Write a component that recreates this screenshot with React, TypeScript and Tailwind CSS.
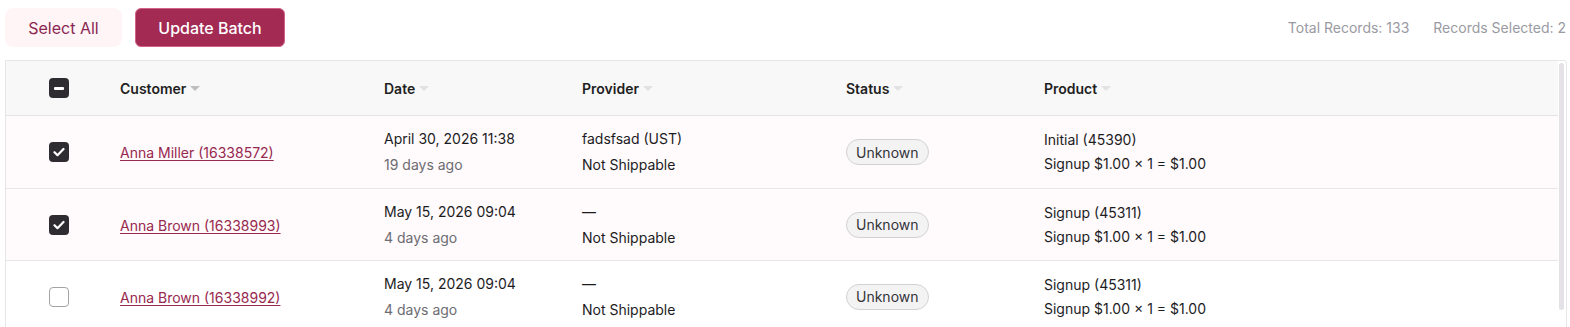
import React from 'react';

type Row = {
  checked: boolean;
  customer: string;
  date: string;
  ago: string;
  provider: string;
  shipping: string;
  product: string;
  line: string;
};

const rows: Row[] = [
  {
    checked: true,
    customer: 'Anna Miller (16338572)',
    date: 'April 30, 2026 11:38',
    ago: '19 days ago',
    provider: 'fadsfsad (UST)',
    shipping: 'Not Shippable',
    product: 'Initial (45390)',
    line: 'Signup $1.00 × 1 = $1.00',
  },
  {
    checked: true,
    customer: 'Anna Brown (16338993)',
    date: 'May 15, 2026 09:04',
    ago: '4 days ago',
    provider: '—',
    shipping: 'Not Shippable',
    product: 'Signup (45311)',
    line: 'Signup $1.00 × 1 = $1.00',
  },
  {
    checked: false,
    customer: 'Anna Brown (16338992)',
    date: 'May 15, 2026 09:04',
    ago: '4 days ago',
    provider: '—',
    shipping: 'Not Shippable',
    product: 'Signup (45311)',
    line: 'Signup $1.00 × 1 = $1.00',
  },
];

const cols = 'grid grid-cols-[114px_264px_198px_264px_198px_1fr]';

function Caret({ dark }: { dark?: boolean }) {
  return (
    <svg width="10" height="5" viewBox="0 0 10 5" className="ml-1 mt-px">
      <path d="M0 0h10L5 5z" fill={dark ? '#bfbfc2' : '#e2e2e4'} />
    </svg>
  );
}

function Checkbox({ state }: { state: 'on' | 'off' | 'mixed' }) {
  if (state === 'off') {
    return <span className="block w-5 h-5 rounded-[4px] border border-[#a3a3a6] bg-white" />;
  }
  return (
    <span className="flex items-center justify-center w-5 h-5 rounded-[4px] bg-[#2f2c31]">
      {state === 'mixed' ? (
        <span className="block w-[10px] h-[3px] rounded-[1px] bg-white" />
      ) : (
        <svg width="12" height="10" viewBox="0 0 12 10">
          <path d="M1.5 5.2l3 3 6-6.2" fill="none" stroke="white" strokeWidth="2.2" strokeLinecap="round" strokeLinejoin="round" />
        </svg>
      )}
    </span>
  );
}

function Head({ label, dark }: { label: string; dark?: boolean }) {
  return (
    <div className="flex items-center text-[14px] font-semibold text-[#1f1f22]">
      {label}
      <Caret dark={dark} />
    </div>
  );
}

export default function App() {
  return (
    <div className="w-[1570px] h-[327px] overflow-hidden bg-white font-['Inter',sans-serif]">
      <div className="flex items-center justify-between pl-[5px] pr-[4px] pt-2">
        <div className="flex items-center gap-[13px]">
          <button className="w-[117px] h-[39px] rounded-lg bg-[#fff5f7] text-[16px] text-[#8a2752]">
            Select All
          </button>
          <button className="w-[150px] h-[39px] rounded-md bg-[#a32a53] border border-[#d3628b] text-[16px] font-medium text-white">
            Update Batch
          </button>
        </div>
        <div className="flex items-center gap-6 text-[14px] text-[#9a9aa3] whitespace-nowrap">
          <span>Total Records: 133</span>
          <span>Records Selected: 2</span>
        </div>
      </div>

      <div className="ml-[5px] mr-[3px] mt-[13px] flex border border-[#e6e6e8] rounded-tr-[3px] h-[300px]">
        <div className="flex-1">
          <div className={`${cols} h-[55px] items-center bg-[#f8f8f8] border-b border-[#e4e4e6]`}>
            <div className="pl-[43px]">
              <Checkbox state="mixed" />
            </div>
            <Head label="Customer" dark />
            <Head label="Date" />
            <Head label="Provider" />
            <Head label="Status" />
            <Head label="Product" />
          </div>
          {rows.map((r, i) => (
            <div
              key={i}
              className={`${cols} ${i === 0 ? 'h-[73px]' : 'h-[72px]'} items-center border-b border-[#e8e6e8] ${r.checked ? 'bg-[#fffafb]' : 'bg-white'}`}
            >
              <div className="pl-[43px]">
                <Checkbox state={r.checked ? 'on' : 'off'} />
              </div>
              <div>
                <a href="#" className="text-[14px] text-[#97284f] underline underline-offset-2">
                  {r.customer}
                </a>
              </div>
              <div className="flex flex-col gap-[6px] text-[14px] leading-5">
                <span className="text-[#1c1c1f]">{r.date}</span>
                <span className="text-[#6c6c72]">{r.ago}</span>
              </div>
              <div className="flex flex-col gap-[6px] text-[14px] leading-5 text-[#1c1c1f]">
                <span>{r.provider}</span>
                <span>{r.shipping}</span>
              </div>
              <div>
                <span className="inline-flex items-center h-[26px] px-[9px] rounded-full border border-[#d2d2d4] bg-[#f3f3f4] text-[14px] text-[#333338]">
                  Unknown
                </span>
              </div>
              <div className="flex flex-col gap-[4px] text-[14px] leading-5 text-[#1c1c1f]">
                <span>{r.product}</span>
                <span>{r.line}</span>
              </div>
            </div>
          ))}
        </div>
        <div className="w-[8px] pt-[2px] pl-[1px]">
          <div className="w-[5px] h-[247px] rounded-full bg-[#e4e2e6]" />
        </div>
      </div>
    </div>
  );
}
